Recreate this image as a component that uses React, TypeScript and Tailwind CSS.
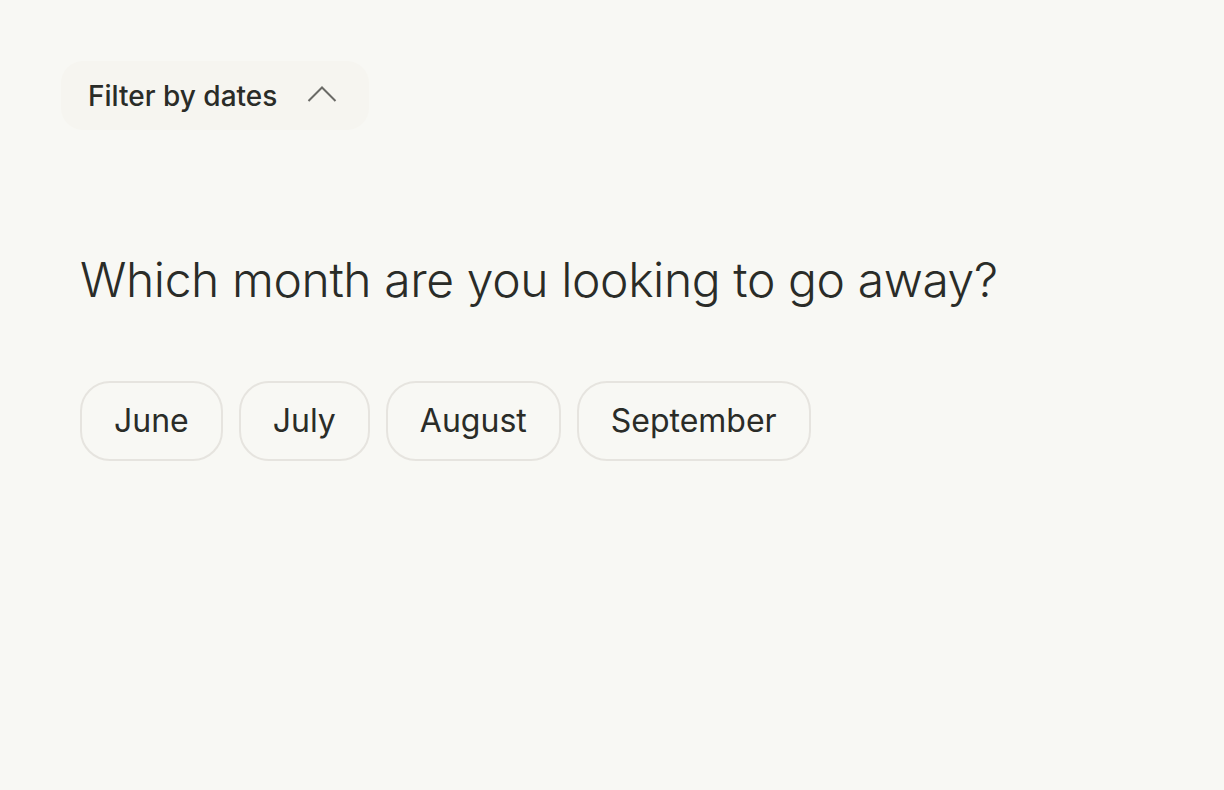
import { useState } from "react";

const months = ["June", "July", "August", "September"];

export default function App() {
  const [open, setOpen] = useState(true);
  const [selected, setSelected] = useState<string | null>(null);

  return (
    <div className="min-h-[790px] w-full bg-[#f8f8f4] text-[#2a2c28] font-['Inter',sans-serif]">
      <div className="px-[61px] pt-[61px]">
        <button
          onClick={() => setOpen(!open)}
          className="flex h-[69px] items-center gap-[30px] rounded-[22px] bg-[#f6f5f0] pl-[27px] pr-[32px] text-[28px] font-medium"
        >
          <span>Filter by dates</span>
          <svg width="30" height="18" viewBox="0 0 30 18" fill="none" className="mt-[-3px]">
            <path d="M1.5 16 L15 2.5 L28.5 16" stroke="#6a6a66" strokeWidth="2" />
          </svg>
        </button>
      </div>

      {open && (
        <div className="px-[80px] pt-[120px]">
          <h1 className="text-[48px] font-light leading-[60px] tracking-[-0.4px]">
            Which month are you looking to go away?
          </h1>
          <div className="mt-[71px] flex gap-[16px]">
            {months.map((m) => (
              <button
                key={m}
                onClick={() => setSelected(m)}
                className={
                  "h-[80px] rounded-[30px] border-2 px-[32px] text-[32px] " +
                  (selected === m ? "border-[#2a2c28]" : "border-[#e6e4df]")
                }
              >
                {m}
              </button>
            ))}
          </div>
        </div>
      )}
    </div>
  );
}
